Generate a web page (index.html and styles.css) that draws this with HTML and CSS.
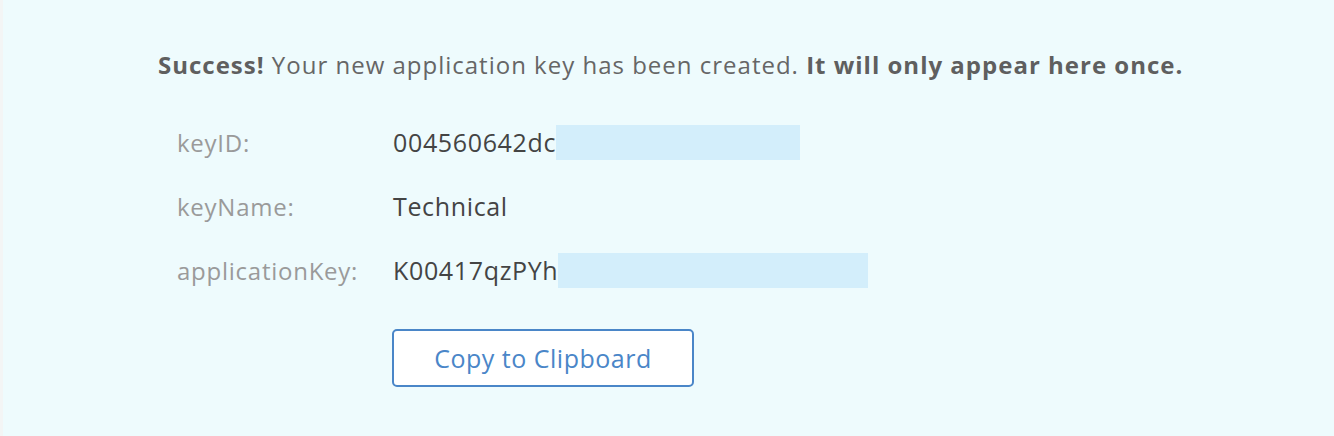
FILE: index.html
```html
<!DOCTYPE html>
<html>
<head>
<meta charset="utf-8">
<link rel="stylesheet" href="styles.css">
</head>
<body>
<div class="page">
  <p class="notice"><strong>Success!</strong> Your new application key has been created. <strong>It will only appear here once.</strong></p>
  <div class="rows">
    <div class="row">
      <span class="label">keyID:</span>
      <span class="value">004560642dc<span class="redact r1"></span></span>
    </div>
    <div class="row">
      <span class="label">keyName:</span>
      <span class="value">Technical</span>
    </div>
    <div class="row">
      <span class="label">applicationKey:</span>
      <span class="value">K00417qzPYh<span class="redact r2"></span></span>
    </div>
  </div>
  <div class="actions">
    <button class="copy-btn" type="button">Copy to Clipboard</button>
  </div>
</div>
</body>
</html>
```
FILE: styles.css
```css
html, body {
  margin: 0;
  padding: 0;
}
body {
  background: #f3f5f5;
  font-family: "Open Sans", "Liberation Sans", sans-serif;
  height: 436px;
  overflow: hidden;
}
.page {
  margin-left: 3px;
  height: 436px;
  background: #eefbfd;
  padding: 50px 0 0 155px;
  box-sizing: border-box;
}
.notice {
  margin: 0;
  font-size: 24px;
  line-height: 30px;
  color: #666;
  letter-spacing: 1px;
}
.notice strong {
  font-weight: 700;
  color: #5f5f5f;
}
.rows {
  display: flex;
  flex-direction: column;
  gap: 28px;
  margin-top: 44px;
  padding-left: 19px;
}
.row {
  display: flex;
  align-items: center;
  height: 36px;
}
.label {
  width: 216px;
  font-size: 24px;
  color: #9a9a9a;
  letter-spacing: 0.75px;
}
.value {
  display: flex;
  align-items: center;
  font-size: 25px;
  color: #444;
  letter-spacing: 0.65px;
}
.redact {
  display: inline-block;
  height: 35px;
  background: #d3eefb;
}
.r1 { width: 244px; }
.r2 { width: 310px; }
.actions {
  padding-left: 234px;
  margin-top: 41px;
}
.copy-btn {
  width: 302px;
  height: 58px;
  background: #fff;
  border: 2px solid #4a86c8;
  border-radius: 5px;
  color: #4a86c8;
  font-family: "Open Sans", "Liberation Sans", sans-serif;
  font-size: 25px;
  letter-spacing: 0.5px;
  padding: 0;
}
```
